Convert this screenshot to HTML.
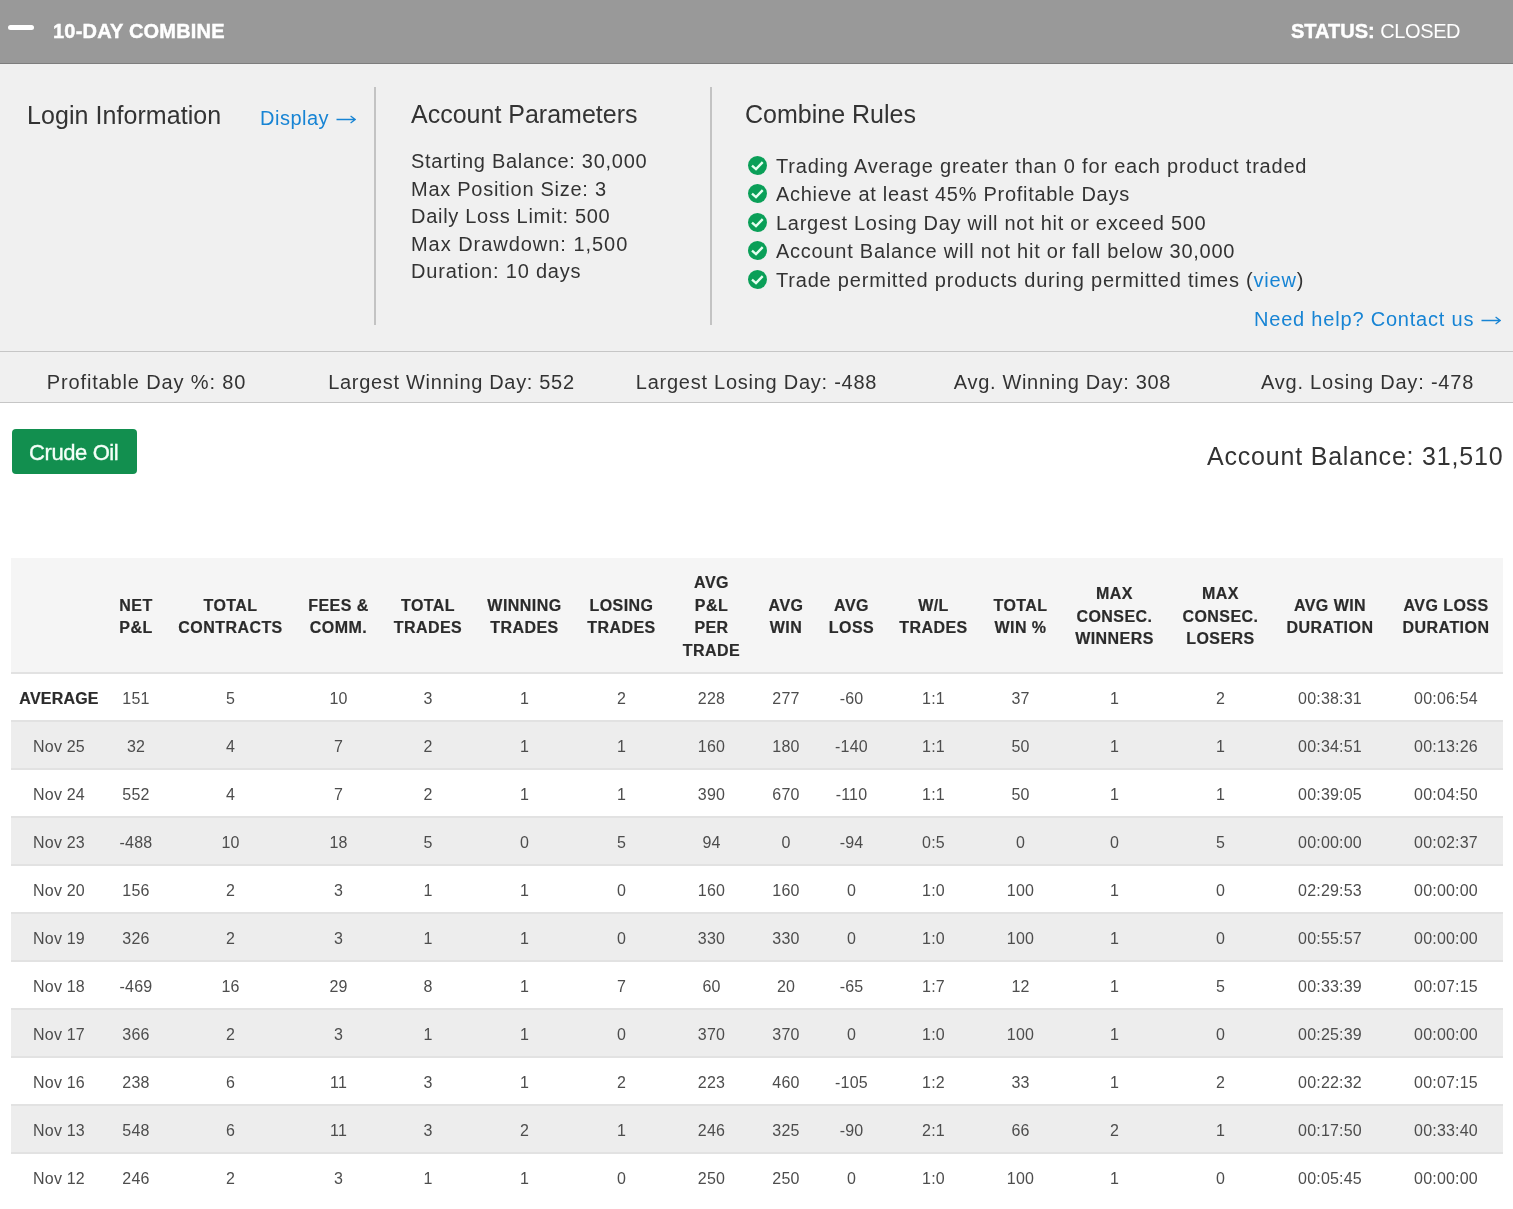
<!DOCTYPE html>
<html>
<head>
<meta charset="utf-8">
<style>
html,body{margin:0;padding:0;}
body{width:1513px;height:1209px;overflow:hidden;background:#fff;position:relative;font-family:"Liberation Sans",sans-serif;color:#333;}
.abs{position:absolute;white-space:nowrap;will-change:transform;}
#topbar{position:absolute;left:0;top:0;width:1513px;height:63px;background:#999;border-bottom:1px solid #7d7d7d;}
#minus{position:absolute;left:8px;top:25px;width:26px;height:5px;border-radius:3px;background:#fff;}
#title{left:53px;top:21px;font-size:20px;line-height:20px;font-weight:bold;color:#fff;letter-spacing:0.2px;-webkit-text-stroke:0.45px #fff;}
#status{left:1291px;top:21px;font-size:20px;line-height:20px;color:#fff;}
#status b{font-weight:bold;-webkit-text-stroke:0.45px #fff;}
#panel{position:absolute;left:0;top:64px;width:1513px;height:287px;background:#f0f0f0;border-bottom:1px solid #c6c6c6;}
#stats{position:absolute;left:0;top:352px;width:1513px;height:50px;background:#f0f0f0;border-bottom:1px solid #c6c6c6;}
.h25{font-size:25px;line-height:25px;color:#333;}
.t20{font-size:20px;line-height:20px;letter-spacing:0.8px;color:#333;}
.blue{color:#1784d4;}
.vdiv{position:absolute;top:87px;width:2px;height:238px;background:#c3c3c3;}
.stat{position:absolute;will-change:transform;top:372px;width:305px;text-align:center;font-size:20px;line-height:20px;letter-spacing:0.8px;color:#333;white-space:nowrap;}
.chk{position:absolute;left:748px;width:19px;height:19px;}
#btn{position:absolute;left:12px;top:429px;width:125px;height:45px;border-radius:4px;background:#128f4f;}
#btntxt{left:29px;top:442px;font-size:22px;line-height:22px;color:#f4fff8;letter-spacing:-0.4px;-webkit-text-stroke:0.35px #f4fff8;}
#bal{left:1207px;top:444px;font-size:25px;line-height:25px;letter-spacing:0.8px;color:#333;}
#tbl{position:absolute;will-change:transform;left:11px;top:558px;width:1492px;table-layout:fixed;border-collapse:collapse;border-spacing:0;}
#tbl th,#tbl td{padding:0;box-sizing:border-box;text-align:center;vertical-align:middle;white-space:nowrap;}
#tbl tr.hd{height:115px;background:#f5f5f5;}
#tbl tr.hd th{font-size:16px;line-height:22.5px;font-weight:bold;color:#2b2b2b;border-bottom:2px solid #e2e2e2;letter-spacing:0.45px;-webkit-text-stroke:0.2px #2b2b2b;}
#tbl td{height:48px;font-size:16px;line-height:22px;color:#4d4d4d;border-bottom:2px solid #e2e2e2;letter-spacing:0.2px;}
#tbl tr.odd td{background:#ededed;}
#tbl th{padding-top:4px;}
#tbl td{padding-top:3px;}
#tbl tr:last-child td{border-bottom:none;}
#tbl tr.avg td:first-child{font-weight:bold;color:#2b2b2b;-webkit-text-stroke:0.2px #2b2b2b;}
</style>
</head>
<body>
<div id="topbar">
  <div id="minus"></div>
  <div id="title" class="abs">10-DAY COMBINE</div>
  <div id="status" class="abs"><b>STATUS:</b> <span style="letter-spacing:-0.4px">CLOSED</span></div>
</div>
<div id="panel"></div>
<div class="abs h25" style="left:27px;top:103px;letter-spacing:0.06px">Login Information</div>
<div class="abs t20 blue" style="left:260px;top:108px;letter-spacing:0.5px">Display</div>
<svg class="abs arrow" style="left:336.3px;top:115px" width="20" height="9" viewBox="0 0 20 9"><path d="M0.5 4.5H19M14.6 1.1L19.2 4.5L14.6 7.9" stroke="#1784d4" stroke-width="1.3" fill="none"/></svg>
<div class="vdiv" style="left:374px;"></div>
<div class="abs h25" style="left:411px;top:102px;">Account Parameters</div>
<div class="abs t20" style="left:411px;top:148px;line-height:27.5px;"><span style="letter-spacing:0.72px">Starting Balance: 30,000</span><br><span style="letter-spacing:0.73px">Max Position Size: 3</span><br><span style="letter-spacing:0.71px">Daily Loss Limit: 500</span><br><span style="letter-spacing:0.96px">Max Drawdown: 1,500</span><br>Duration: 10 days</div>
<div class="vdiv" style="left:710px;"></div>
<div class="abs h25" style="left:745px;top:102px;">Combine Rules</div>
<div class="abs t20" style="left:776px;top:152px;line-height:28.4px;">Trading Average greater than 0 for each product traded<br><span style="letter-spacing:0.72px">Achieve at least 45% Profitable Days</span><br><span style="letter-spacing:0.72px">Largest Losing Day will not hit or exceed 500</span><br><span style="letter-spacing:0.75px">Account Balance will not hit or fall below 30,000</span><br>Trade permitted products during permitted times (<span class="blue">view</span>)</div>
<svg class="chk" style="top:155.9px" viewBox="0 0 19 19"><circle cx="9.5" cy="9.5" r="9.5" fill="#0a9f58"/><polyline points="4,9.6 8,13.1 14.7,6.1" fill="none" stroke="#e4fff0" stroke-width="2.4"/></svg>
<svg class="chk" style="top:184.1px" viewBox="0 0 19 19"><circle cx="9.5" cy="9.5" r="9.5" fill="#0a9f58"/><polyline points="4,9.6 8,13.1 14.7,6.1" fill="none" stroke="#e4fff0" stroke-width="2.4"/></svg>
<svg class="chk" style="top:213.0px" viewBox="0 0 19 19"><circle cx="9.5" cy="9.5" r="9.5" fill="#0a9f58"/><polyline points="4,9.6 8,13.1 14.7,6.1" fill="none" stroke="#e4fff0" stroke-width="2.4"/></svg>
<svg class="chk" style="top:241.2px" viewBox="0 0 19 19"><circle cx="9.5" cy="9.5" r="9.5" fill="#0a9f58"/><polyline points="4,9.6 8,13.1 14.7,6.1" fill="none" stroke="#e4fff0" stroke-width="2.4"/></svg>
<svg class="chk" style="top:269.9px" viewBox="0 0 19 19"><circle cx="9.5" cy="9.5" r="9.5" fill="#0a9f58"/><polyline points="4,9.6 8,13.1 14.7,6.1" fill="none" stroke="#e4fff0" stroke-width="2.4"/></svg>
<div class="abs t20 blue" style="left:1254px;top:309px;">Need help? Contact us</div>
<svg class="abs arrow" style="left:1481.1px;top:316.1px" width="20" height="9" viewBox="0 0 20 9"><path d="M0.5 4.5H19M14.6 1.1L19.2 4.5L14.6 7.9" stroke="#1784d4" stroke-width="1.3" fill="none"/></svg>

<div id="stats"></div>
<div class="stat" style="left:-6.5px;letter-spacing:0.85px">Profitable Day %: 80</div>
<div class="stat" style="left:299px;letter-spacing:0.68px">Largest Winning Day: 552</div>
<div class="stat" style="left:604px;letter-spacing:0.75px">Largest Losing Day: -488</div>
<div class="stat" style="left:909.5px;letter-spacing:0.68px">Avg. Winning Day: 308</div>
<div class="stat" style="left:1215px;">Avg. Losing Day: -478</div>

<div id="btn"></div>
<div id="btntxt" class="abs">Crude Oil</div>
<div id="bal" class="abs">Account Balance: 31,510</div>

<!--TABLE-->
<table id="tbl">
<colgroup>
<col style="width:96px">
<col style="width:58px">
<col style="width:131px">
<col style="width:85px">
<col style="width:94px">
<col style="width:99px">
<col style="width:95px">
<col style="width:85px">
<col style="width:64px">
<col style="width:67px">
<col style="width:97px">
<col style="width:77px">
<col style="width:111px">
<col style="width:101px">
<col style="width:118px">
<col style="width:114px">
</colgroup>
<tr class="hd">
<th></th><th>NET<br>P&amp;L</th><th>TOTAL<br>CONTRACTS</th><th>FEES &amp;<br>COMM.</th><th>TOTAL<br>TRADES</th><th>WINNING<br>TRADES</th><th>LOSING<br>TRADES</th><th>AVG<br>P&amp;L<br>PER<br>TRADE</th><th>AVG<br>WIN</th><th>AVG<br>LOSS</th><th>W/L<br>TRADES</th><th>TOTAL<br>WIN %</th><th>MAX<br>CONSEC.<br>WINNERS</th><th>MAX<br>CONSEC.<br>LOSERS</th><th>AVG WIN<br>DURATION</th><th>AVG LOSS<br>DURATION</th>
</tr>
<tr class="avg"><td>AVERAGE</td><td>151</td><td>5</td><td>10</td><td>3</td><td>1</td><td>2</td><td>228</td><td>277</td><td>-60</td><td>1:1</td><td>37</td><td>1</td><td>2</td><td>00:38:31</td><td>00:06:54</td></tr>
<tr class="odd"><td>Nov 25</td><td>32</td><td>4</td><td>7</td><td>2</td><td>1</td><td>1</td><td>160</td><td>180</td><td>-140</td><td>1:1</td><td>50</td><td>1</td><td>1</td><td>00:34:51</td><td>00:13:26</td></tr>
<tr class="even"><td>Nov 24</td><td>552</td><td>4</td><td>7</td><td>2</td><td>1</td><td>1</td><td>390</td><td>670</td><td>-110</td><td>1:1</td><td>50</td><td>1</td><td>1</td><td>00:39:05</td><td>00:04:50</td></tr>
<tr class="odd"><td>Nov 23</td><td>-488</td><td>10</td><td>18</td><td>5</td><td>0</td><td>5</td><td>94</td><td>0</td><td>-94</td><td>0:5</td><td>0</td><td>0</td><td>5</td><td>00:00:00</td><td>00:02:37</td></tr>
<tr class="even"><td>Nov 20</td><td>156</td><td>2</td><td>3</td><td>1</td><td>1</td><td>0</td><td>160</td><td>160</td><td>0</td><td>1:0</td><td>100</td><td>1</td><td>0</td><td>02:29:53</td><td>00:00:00</td></tr>
<tr class="odd"><td>Nov 19</td><td>326</td><td>2</td><td>3</td><td>1</td><td>1</td><td>0</td><td>330</td><td>330</td><td>0</td><td>1:0</td><td>100</td><td>1</td><td>0</td><td>00:55:57</td><td>00:00:00</td></tr>
<tr class="even"><td>Nov 18</td><td>-469</td><td>16</td><td>29</td><td>8</td><td>1</td><td>7</td><td>60</td><td>20</td><td>-65</td><td>1:7</td><td>12</td><td>1</td><td>5</td><td>00:33:39</td><td>00:07:15</td></tr>
<tr class="odd"><td>Nov 17</td><td>366</td><td>2</td><td>3</td><td>1</td><td>1</td><td>0</td><td>370</td><td>370</td><td>0</td><td>1:0</td><td>100</td><td>1</td><td>0</td><td>00:25:39</td><td>00:00:00</td></tr>
<tr class="even"><td>Nov 16</td><td>238</td><td>6</td><td>11</td><td>3</td><td>1</td><td>2</td><td>223</td><td>460</td><td>-105</td><td>1:2</td><td>33</td><td>1</td><td>2</td><td>00:22:32</td><td>00:07:15</td></tr>
<tr class="odd"><td>Nov 13</td><td>548</td><td>6</td><td>11</td><td>3</td><td>2</td><td>1</td><td>246</td><td>325</td><td>-90</td><td>2:1</td><td>66</td><td>2</td><td>1</td><td>00:17:50</td><td>00:33:40</td></tr>
<tr class="even"><td>Nov 12</td><td>246</td><td>2</td><td>3</td><td>1</td><td>1</td><td>0</td><td>250</td><td>250</td><td>0</td><td>1:0</td><td>100</td><td>1</td><td>0</td><td>00:05:45</td><td>00:00:00</td></tr>
</table>
<!--/TABLE-->
</body>
</html>
